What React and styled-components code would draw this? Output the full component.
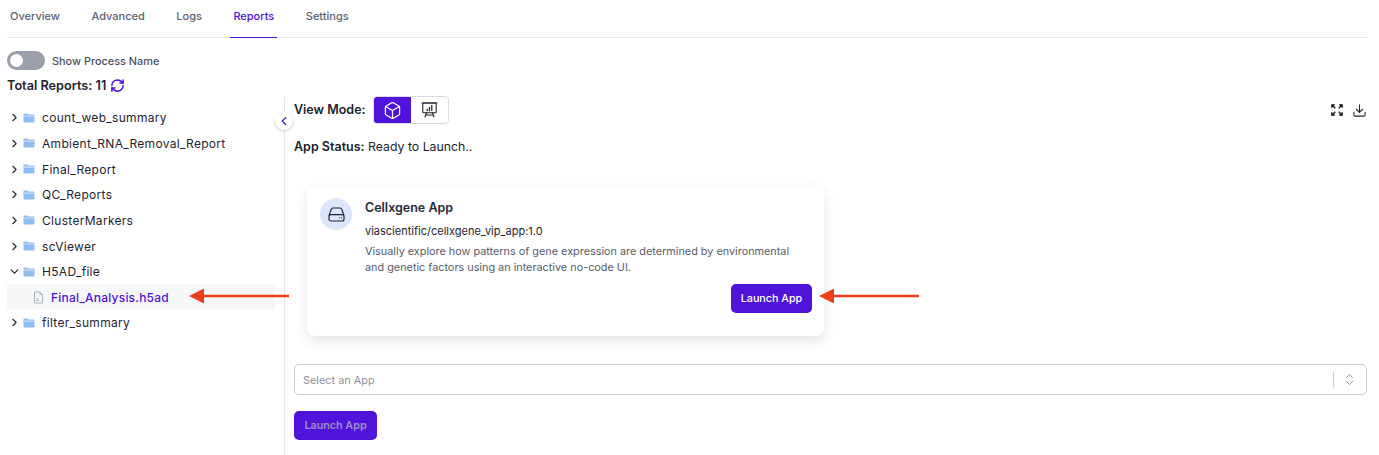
import React from "react";
import styled, { createGlobalStyle } from "styled-components";
import { ChevronRight, ChevronDown, ChevronLeft, ChevronsUpDown, RefreshCw, Box, Download } from "lucide-react";

const Global = createGlobalStyle`
  html, body { margin: 0; padding: 0; background: #fff; }
  body { font-family: Inter, "Liberation Sans", sans-serif; color: #111827; -webkit-font-smoothing: antialiased; }
`;
const Page = styled.div`
  position: relative;
  width: 1379px;
  height: 455px;
  overflow: hidden;
  padding: 0 12px 0 7px;
  box-sizing: border-box;
`;
const Tabs = styled.div`
  display: flex;
  height: 38px;
  border-bottom: 1px solid #e5e7eb;
  box-sizing: border-box;
`;
const Tab = styled.div`
  padding: 10px 3px 0;
  margin-right: 25.5px;
  height: 38px;
  box-sizing: border-box;
  font-size: 11px;
  font-weight: 500;
  line-height: 13px;
  color: ${p => (p.$active ? "#4f13d9" : "#5b6270")};
  border-bottom: 1px solid ${p => (p.$active ? "#4f13d9" : "transparent")};
`;
const ToggleRow = styled.div`
  display: flex;
  align-items: center;
  gap: 7px;
  margin-top: 13px;
  height: 19px;
`;
const Track = styled.div`
  width: 38px;
  height: 19px;
  border-radius: 10px;
  background: #9b9eab;
  position: relative;
  &::after {
    content: "";
    position: absolute;
    left: 3px;
    top: 3px;
    width: 13px;
    height: 13px;
    border-radius: 50%;
    background: #fff;
  }
`;
const ToggleLabel = styled.span`
  font-size: 10.9px;
  font-weight: 500;
  color: #4b5160;
`;
const Total = styled.div`
  display: flex;
  align-items: center;
  gap: 4px;
  margin-top: 6px;
  height: 19px;
  font-size: 12.7px;
  font-weight: 600;
  color: #1f2430;
  svg { color: #4f13d9; }
`;
const Body = styled.div`
  display: flex;
  margin-top: 1px;
`;
const Sidebar = styled.div`
  width: 268px;
  margin-right: 9px;
  padding-top: 9px;
`;
const Row = styled.div`
  display: flex;
  align-items: center;
  height: 25.65px;
  font-size: 12px;
  color: #1f2430;
  letter-spacing: 0.025em;
  padding-left: 1px;
  ${p => p.$selected && `
    background: #f6f7f9;
    color: #4f13d9;
    font-weight: 500;
    letter-spacing: 0.018em;
    padding-left: 26px;
  `}
`;
const Caret = styled.span`
  display: inline-flex;
  justify-content: center;
  width: 13px;
  margin-right: 2px;
  color: #1f2430;
`;
const FolderIcon = styled.span`
  display: inline-flex;
  margin-right: 7px;
`;
const FileGlyph = styled.span`
  display: inline-flex;
  margin-right: 7px;
`;
const Main = styled.div`
  flex: 1;
  height: 359px;
  border-left: 1px solid #e5e7eb;
  padding-left: 9px;
  box-sizing: border-box;
`;
const ModeRow = styled.div`
  display: flex;
  align-items: center;
  height: 28px;
`;
const Strong = styled.span`
  font-size: 12.5px;
  font-weight: 600;
  color: #1a1f2b;
`;
const ModeLabel = styled(Strong)`
  position: relative;
  top: -1px;
`;
const ModeGroup = styled.div`
  display: flex;
  margin-left: 7px;
  border: 1px solid #d8dae4;
  border-radius: 4px;
  height: 28px;
  box-sizing: border-box;
  overflow: hidden;
`;
const ModeBtn = styled.div`
  width: 37px;
  display: flex;
  align-items: center;
  justify-content: center;
  background: ${p => (p.$active ? "#4f13d9" : "#fff")};
  color: ${p => (p.$active ? "#fff" : "#1f2430")};
`;
const Tools = styled.div`
  margin-left: auto;
  display: flex;
  align-items: center;
  gap: 9px;
  color: #1f2430;
`;
const Status = styled.div`
  margin-top: 14px;
  height: 18px;
  font-size: 12.3px;
  line-height: 18px;
  color: #1a1f2b;
`;
const Card = styled.div`
  margin: 30px 0 0 13px;
  width: 517px;
  height: 150px;
  box-sizing: border-box;
  border-radius: 8px;
  background: #fff;
  box-shadow: 0 5px 13px -1px rgba(30, 35, 60, 0.14);
  padding: 12px 12px 0 13px;
  display: flex;
  gap: 13px;
`;
const IconCircle = styled.div`
  width: 32px;
  height: 32px;
  flex: none;
  border-radius: 50%;
  background: #dbe5fb;
  color: #1f2430;
  display: flex;
  align-items: center;
  justify-content: center;
`;
const CardBody = styled.div`
  flex: 1;
  display: flex;
  flex-direction: column;
`;
const CardTitle = styled.div`
  font-size: 12.5px;
  font-weight: 600;
  color: #252a3a;
  line-height: 18px;
  margin-top: 1px;
`;
const CardImage = styled.div`
  font-size: 11px;
  color: #1f2430;
  line-height: 16px;
  margin-top: 6px;
`;
const CardDesc = styled.div`
  font-size: 10.85px;
  color: #555b6b;
  line-height: 15.5px;
  margin-top: 5px;
`;
const PrimaryBtn = styled.button`
  font-family: inherit;
  border: 0;
  border-radius: 5px;
  background: #4f13d9;
  color: ${p => (p.$disabled ? "#9f8fc9" : "#fff")};
  font-size: 10.75px;
  font-weight: ${p => (p.$disabled ? 600 : 500)};
  height: 29px;
  padding: 0;
  width: ${p => p.$w}px;
`;
const CardActions = styled.div`
  display: flex;
  justify-content: flex-end;
  margin-top: 9px;
`;
const Select = styled.div`
  margin-top: 28px;
  height: 31px;
  box-sizing: border-box;
  border: 1px solid #c9ccd3;
  border-radius: 5px;
  display: flex;
  align-items: center;
  padding-left: 8px;
  font-size: 10.9px;
  color: #8d92a0;
`;
const SelectEnd = styled.div`
  margin-left: auto;
  display: flex;
  align-items: center;
  height: 100%;
  color: #7f8492;
  &::before {
    content: "";
    width: 1px;
    height: 15px;
    background: #c9ccd3;
    margin-right: 8px;
  }
  svg { margin-right: 9px; }
`;
const BottomAction = styled.div`
  margin-top: 16px;
`;
const Collapse = styled.div`
  position: absolute;
  left: 275px;
  top: 112px;
  width: 18px;
  height: 18px;
  border-radius: 50%;
  background: #fff;
  box-shadow: 0 1px 3px rgba(0, 0, 0, 0.2);
  color: #4f13d9;
  display: flex;
  align-items: center;
  justify-content: center;
`;
const Arrow = styled.svg`
  position: absolute;
  left: ${p => p.$x}px;
  top: ${p => p.$y}px;
`;

const FolderSvg = () => (
  <svg width="12" height="10" viewBox="0 0 12 10">
    <path d="M0.5 1.5C0.5 .9 1 .5 1.5 .5H4.2L5.2 1.6H10.5C11.1 1.6 11.5 2 11.5 2.6V8.5C11.5 9.1 11 9.5 10.5 9.5H1.5C1 9.5 .5 9.1 .5 8.5Z" fill="#8fbdf0" />
    <rect x="0.5" y="2.6" width="11" height="1" fill="#d4e6fa" />
  </svg>
);
const FileSvg = () => (
  <svg width="11" height="13" viewBox="0 0 11 13" fill="none" stroke="#a4a8b2" strokeWidth="0.9">
    <path d="M1.5 1H7L9.5 3.5V12H1.5Z" />
    <path d="M7 1V3.5H9.5" />
    <path d="M3.3 9.5H6M3.3 7.8H5" />
  </svg>
);
const ExpandSvg = () => (
  <svg width="12" height="12" viewBox="0 0 12 12" fill="none" stroke="#111" strokeWidth="1.25">
    <path d="M.8 3.8V.8H3.8M.8 .8L4.3 4.3M8.2 .8H11.2V3.8M11.2 .8L7.7 4.3M.8 8.2V11.2H3.8M.8 11.2L4.3 7.7M8.2 11.2H11.2V8.2M11.2 11.2L7.7 7.7" />
  </svg>
);
const BoardSvg = () => (
  <svg width="17" height="16" viewBox="0 0 17 16" fill="none" stroke="currentColor" strokeWidth="1.1" strokeLinecap="round">
    <path d="M1 1H16" />
    <rect x="1.8" y="1" width="13.4" height="9.8" rx="0.8" />
    <path d="M5.5 10.8L4 15M11.5 10.8L13 15M4.6 13H12.4" />
    <path d="M6.2 8.6V7.2M8.5 8.6V5.4M10.8 8.6V3.6" strokeWidth="1.3" />
  </svg>
);
const DriveSvg = () => (
  <svg width="17" height="15" viewBox="0 0 17 15" fill="none" stroke="currentColor" strokeWidth="1.2" strokeLinejoin="round">
    <path d="M1 8.5L3.2 2.4C3.5 1.6 4.2 1 5.1 1H11.9C12.8 1 13.5 1.6 13.8 2.4L16 8.5" />
    <rect x="1" y="7.6" width="15" height="6.4" rx="2" />
    <path d="M11.6 10.8H11.7M13.6 10.8H13.7" strokeWidth="1" strokeLinecap="round" />
  </svg>
);

const items = ["count_web_summary", "Ambient_RNA_Removal_Report", "Final_Report", "QC_Reports", "ClusterMarkers", "scViewer"];

const FolderRow = ({ name, open }) => (
  <Row>
    <Caret>{open ? <ChevronDown size={15} strokeWidth={2.1} /> : <ChevronRight size={15} strokeWidth={2.1} />}</Caret>
    <FolderIcon><FolderSvg /></FolderIcon>
    {name}
  </Row>
);

const RedArrow = ({ x, y, w }) => (
  <Arrow $x={x} $y={y} width={w} height="16" viewBox={`0 0 ${w} 16`}>
    <path d={`M0 8L15 .5V6.7H${w}V9.3H15V15.5Z`} fill="#ea3f1a" />
  </Arrow>
);

export default function App() {
  return (
    <Page>
      <Global />
      <Tabs>
        <Tab>Overview</Tab>
        <Tab>Advanced</Tab>
        <Tab>Logs</Tab>
        <Tab $active>Reports</Tab>
        <Tab>Settings</Tab>
      </Tabs>
      <ToggleRow>
        <Track />
        <ToggleLabel>Show Process Name</ToggleLabel>
      </ToggleRow>
      <Total>
        Total Reports: 11 <RefreshCw size={15} strokeWidth={2.4} />
      </Total>
      <Body>
        <Sidebar>
          {items.map(n => <FolderRow key={n} name={n} />)}
          <FolderRow name="H5AD_file" open />
          <Row $selected>
            <FileGlyph><FileSvg /></FileGlyph>
            Final_Analysis.h5ad
          </Row>
          <FolderRow name="filter_summary" />
        </Sidebar>
        <Main>
          <ModeRow>
            <ModeLabel>View Mode:</ModeLabel>
            <ModeGroup>
              <ModeBtn $active><Box size={19} strokeWidth={1.5} /></ModeBtn>
              <ModeBtn><BoardSvg /></ModeBtn>
            </ModeGroup>
            <Tools>
              <ExpandSvg />
              <Download size={15} strokeWidth={1.7} />
            </Tools>
          </ModeRow>
          <Status><Strong>App Status:</Strong> Ready to Launch..</Status>
          <Card>
            <IconCircle><DriveSvg /></IconCircle>
            <CardBody>
              <CardTitle>Cellxgene App</CardTitle>
              <CardImage>viascientific/cellxgene_vip_app:1.0</CardImage>
              <CardDesc>
                Visually explore how patterns of gene expression are determined by environmental
                <br />
                and genetic factors using an interactive no-code UI.
              </CardDesc>
              <CardActions><PrimaryBtn $w={81}>Launch App</PrimaryBtn></CardActions>
            </CardBody>
          </Card>
          <Select>
            Select an App
            <SelectEnd><ChevronsUpDown size={15} strokeWidth={1.3} /></SelectEnd>
          </Select>
          <BottomAction><PrimaryBtn $w={83} $disabled>Launch App</PrimaryBtn></BottomAction>
        </Main>
      </Body>
      <Collapse><ChevronLeft size={14} strokeWidth={2} /></Collapse>
      <RedArrow x={189} y={288} w={100} />
      <RedArrow x={819} y={288} w={100} />
    </Page>
  );
}
